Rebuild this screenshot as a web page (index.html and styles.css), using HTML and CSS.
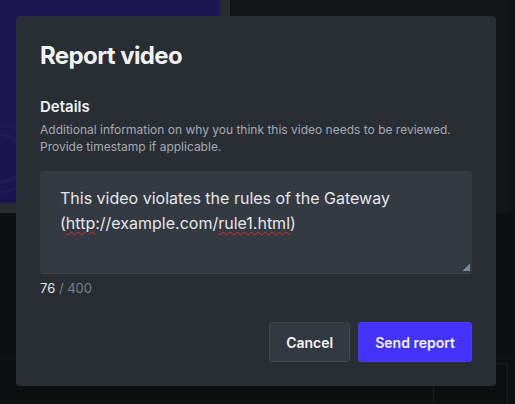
FILE: index.html
```html
<!DOCTYPE html>
<html lang="en">
<head>
<meta charset="utf-8">
<title>Report video</title>
<link rel="stylesheet" href="styles.css">
</head>
<body>
<div class="page">
  <div class="player-col">
    <div class="player"><div class="thumb"></div></div>
  </div>
  <div class="side-col">
    <div class="side-top"></div>
  </div>
  <div class="footer-row">
    <div class="footer-box"></div>
  </div>
</div>

<div class="modal" role="dialog" aria-labelledby="modal-title">
  <h1 class="modal-title" id="modal-title">Report video</h1>
  <div class="field">
    <div class="field-label">Details</div>
    <p class="field-help">Additional information on why you think this video needs to be reviewed. Provide timestamp if applicable.</p>
    <div class="textarea">This video violates the rules of the Gateway (<span class="misspelled">http</span>://example.com/<span class="misspelled">rule1.html</span>)<span class="resize-handle"></span></div>
    <div class="counter"><span class="count">76</span> / 400</div>
  </div>
  <div class="actions">
    <button class="btn btn-secondary" type="button">Cancel</button>
    <button class="btn btn-primary" type="button">Send report</button>
  </div>
</div>
</body>
</html>
```

FILE: styles.css
```css
* { box-sizing: border-box; }

html, body {
  margin: 0;
  padding: 0;
  height: 100%;
}

body {
  background: #0e0f12;
  font-family: Inter, "Noto Sans", sans-serif;
  color: #eef0f3;
  overflow: hidden;
}

.page {
  display: grid;
  grid-template-columns: 230px 1fr;
  grid-template-rows: 213px 145px 1fr;
  height: 404px;
  width: 515px;
}

.player-col {
  background: #2a2b2e;
  padding: 0 10px 10px 0;
}

.player {
  height: 100%;
  background: #1a1550;
}

.thumb {
  height: 100%;
  background:
    radial-gradient(circle at 0% 78%, transparent 22px, rgba(60,50,130,0.25) 23px, transparent 26px, transparent 32px, rgba(60,50,130,0.2) 33px, transparent 36px),
    linear-gradient(180deg, #1c1652 0%, #1a1550 100%);
}

.side-col {
  background: #111215;
  padding-right: 6px;
}

.side-top {
  height: 100%;
  background: #131418;
}

.footer-row {
  grid-column: 1 / 3;
  grid-row: 3;
  border-top: 1px solid #16171b;
  display: flex;
  justify-content: flex-end;
  padding: 4px 7px 0 0;
}

.footer-box {
  width: 75px;
  border: 1px solid #1a1b1f;
  border-bottom: 0;
  border-radius: 2px 2px 0 0;
}

.modal {
  position: fixed;
  top: 16px;
  left: 16px;
  width: 480px;
  height: 370px;
  background: #292d34;
  border-radius: 4px;
  padding: 24px;
  display: flex;
  flex-direction: column;
}

.modal-title {
  margin: 0;
  font-size: 24px;
  line-height: 32px;
  font-weight: 700;
  color: #f1f2f4;
  letter-spacing: -0.6px;
}

.field {
  margin-top: 25px;
}

.field-label {
  font-size: 15px;
  line-height: 20px;
  font-weight: 600;
  color: #eef0f3;
}

.field-help {
  margin: 5px 0 0 0;
  font-size: 12px;
  line-height: 16.6px;
  color: #a5aab2;
}

.textarea {
  position: relative;
  margin-top: 16px;
  height: 103px;
  background: #343a42;
  border-radius: 3px;
  border-bottom: 1px solid #3d444d;
  padding: 15px 20px;
  font-size: 16px;
  line-height: 25px;
  color: #e4e6e9;
}

.misspelled {
  text-decoration: underline wavy #e0302c;
  text-decoration-thickness: 1px;
  text-underline-offset: 2px;
}

.resize-handle {
  position: absolute;
  right: 2px;
  bottom: 2px;
  width: 7px;
  height: 7px;
  background: linear-gradient(135deg, transparent 50%, #7d8791 50%);
}

.counter {
  margin-top: 5px;
  font-size: 13px;
  line-height: 18px;
  color: #7a808a;
}

.count {
  color: #e6e8eb;
}

.actions {
  margin-top: auto;
  display: flex;
  justify-content: flex-end;
  gap: 8px;
}

.btn {
  height: 40px;
  padding: 0 16px;
  border-radius: 3px;
  font-family: Inter, "Noto Sans", sans-serif;
  font-size: 14px;
  font-weight: 600;
  color: #f2f3f5;
  cursor: pointer;
}

.btn-secondary {
  background: #333940;
  border: 1px solid #41474f;
}

.btn-primary {
  background: #4532fa;
  border: 1px solid #4a3aff;
}
```
